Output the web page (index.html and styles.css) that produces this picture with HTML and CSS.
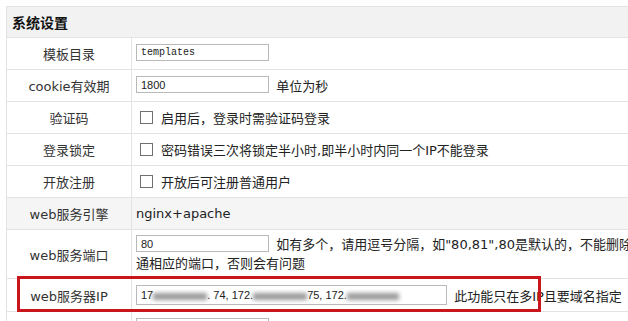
FILE: index.html
```html
<!DOCTYPE html>
<html>
<head>
  <meta charset="utf-8">
  <link rel="stylesheet" href="styles.css">
</head>
<body>
  <table class="settings">
    <tr class="head-row">
      <th colspan="2">系统设置</th>
    </tr>
    <tr>
      <td class="label">模板目录</td>
      <td class="value"><input type="text" class="field mono" value="templates"></td>
    </tr>
    <tr>
      <td class="label">cookie有效期</td>
      <td class="value"><input type="text" class="field" value="1800"> <span class="hint">单位为秒</span></td>
    </tr>
    <tr>
      <td class="label">验证码</td>
      <td class="value"><label class="check"><span class="box"></span>启用后，登录时需验证码登录</label></td>
    </tr>
    <tr>
      <td class="label">登录锁定</td>
      <td class="value"><label class="check"><span class="box"></span>密码错误三次将锁定半小时,即半小时内同一个IP不能登录</label></td>
    </tr>
    <tr>
      <td class="label">开放注册</td>
      <td class="value"><label class="check"><span class="box"></span>开放后可注册普通用户</label></td>
    </tr>
    <tr class="muted">
      <td class="label">web服务引擎</td>
      <td class="value">nginx+apache</td>
    </tr>
    <tr class="tall">
      <td class="label">web服务端口</td>
      <td class="value">
        <div class="line"><input type="text" class="field" value="80"> <span class="hint">如有多个，请用逗号分隔，如"80,81",80是默认的，不能删除，需开</span></div>
        <div class="line">通相应的端口，否则会有问题</div>
      </td>
    </tr>
    <tr class="ip-row">
      <td class="label">web服务器IP</td>
      <td class="value">
        <span class="field wide">17<span class="blur b1"></span>. 74, 172.<span class="blur b2"></span>75, 172.<span class="blur b3"></span></span>
        <span class="hint">此功能只在多IP且要域名指定</span>
      </td>
    </tr>
    <tr>
      <td class="label"></td>
      <td class="value"><input type="text" class="field" value=""></td>
    </tr>
  </table>
  <div class="mark"></div>
</body>
</html>
```

FILE: styles.css
```css
body {
  margin: 0;
  padding: 6px 0 0 6px;
  overflow: hidden;
  font-family: "DejaVu Sans", "Noto Sans CJK SC", sans-serif;
  font-size: 13px;
  color: #222;
  background: #fff;
}
.settings {
  width: 680px;
  border-collapse: collapse;
  border: 1px solid #e3e3e3;
}
.settings th,
.settings td {
  border: 1px solid #e3e3e3;
  padding: 0;
}
.head-row th {
  height: 30px;
  background: #f2f2f3;
  text-align: left;
  padding-left: 5px;
  font-size: 14px;
  font-weight: bold;
  font-family: "Noto Sans CJK SC", sans-serif;
  color: #111;
}
.settings td {
  height: 31px;
  white-space: nowrap;
}
.label {
  width: 124px;
  text-align: center;
  color: #333;
}
.value {
  padding: 0 4px !important;
  text-align: left;
}
.muted td {
  background: #f5f5f5;
}
.field {
  box-sizing: border-box;
  width: 133px;
  height: 17px;
  border: 1px solid #b9b9b9;
  padding: 0 4px;
  font-family: "Liberation Sans", sans-serif;
  font-size: 11px;
  color: #222;
  vertical-align: middle;
  margin: 0 3px 2px 0;
  outline: none;
}
.mono {
  font-family: "Liberation Mono", monospace;
  font-size: 10px;
}
.hint {
  vertical-align: middle;
}
.check {
  display: flex;
  align-items: center;
  gap: 8px;
  padding-left: 4px;
}
.box {
  width: 11px;
  height: 11px;
  border: 1px solid #707070;
  background: #fff;
}
.tall td {
  height: 40px;
}
.tall .value {
  padding: 4px 4px !important;
}
.line {
  height: 20px;
  line-height: 20px;
}
.ip-row td {
  height: 32px;
}
.wide {
  display: inline-block;
  width: 311px;
  height: 20px;
  line-height: 18px;
  margin-top: 2px;
}
.blur {
  display: inline-block;
  height: 7px;
  background: #9a9a9a;
  filter: blur(2px);
  vertical-align: middle;
}
.b1 {
  width: 54px;
}
.b2 {
  width: 54px;
}
.b3 {
  width: 52px;
}
.mark {
  position: absolute;
  left: 17px;
  top: 276px;
  width: 518px;
  height: 30px;
  border: 3px solid #c9161c;
}
```
